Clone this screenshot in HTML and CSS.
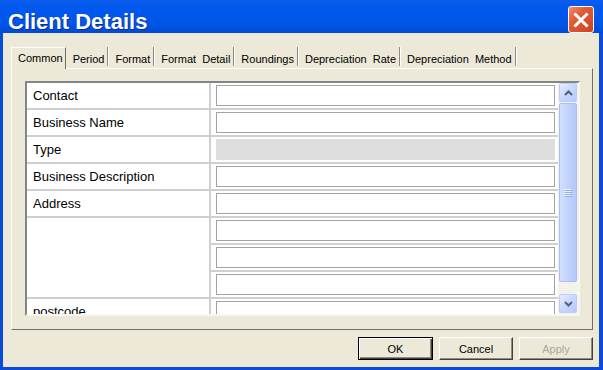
FILE: index.html
```html
<!DOCTYPE html>
<html lang="en">
<head>
    <meta charset="UTF-8">
    <title>Client Details</title>
    <link rel="stylesheet" href="styles.css">
</head>
<body>

    <div class="window">
        <div class="titlebar">
            <span class="title">Client Details</span>
            <div class="close">
                <svg width="16" height="16" viewBox="0 0 16 16">
                    <path d="M2.5 2.5 L13.5 13.5 M13.5 2.5 L2.5 13.5" stroke="#fff" stroke-width="3" stroke-linecap="square" fill="none"/>
                </svg>
            </div>
        </div>

        <div class="client">
            <div class="tabs">
                <div class="tab active">Common</div>
                <div class="tab">Period</div>
                <div class="tab">Format</div>
                <div class="tab">Format  Detail</div>
                <div class="tab">Roundings</div>
                <div class="tab">Depreciation  Rate</div>
                <div class="tab">Depreciation  Method</div>
            </div>

            <div class="panel">
                <div class="grid">
                    <div class="rows">
                        <div class="row">
                            <div class="label">Contact</div>
                            <div class="value"><div class="cell"><div class="box"></div></div></div>
                        </div>
                        <div class="row">
                            <div class="label">Business Name</div>
                            <div class="value"><div class="cell"><div class="box"></div></div></div>
                        </div>
                        <div class="row">
                            <div class="label">Type</div>
                            <div class="value"><div class="cell"><div class="box disabled"></div></div></div>
                        </div>
                        <div class="row">
                            <div class="label">Business Description</div>
                            <div class="value"><div class="cell"><div class="box"></div></div></div>
                        </div>
                        <div class="row">
                            <div class="label">Address</div>
                            <div class="value"><div class="cell"><div class="box"></div></div></div>
                        </div>
                        <div class="row">
                            <div class="label"></div>
                            <div class="value stack">
                                <div class="cell"><div class="box"></div></div>
                                <div class="cell"><div class="box"></div></div>
                                <div class="cell"><div class="box"></div></div>
                            </div>
                        </div>
                        <div class="row">
                            <div class="label">postcode</div>
                            <div class="value"><div class="cell"><div class="box"></div></div></div>
                        </div>
                    </div>

                    <div class="scrollbar">
                        <div class="sb-btn">
                            <svg width="9" height="6" viewBox="0 0 9 6">
                                <polyline points="1,5 4.5,1.5 8,5" stroke="#4d6185" stroke-width="2" fill="none"/>
                            </svg>
                        </div>
                        <div class="thumb">
                            <svg width="8" height="8" viewBox="0 0 8 8">
                                <path d="M0 0.5 H7 M0 2.5 H7 M0 4.5 H7 M0 6.5 H7" stroke="#eef3fe" stroke-width="1"/>
                                <path d="M1 1.5 H8 M1 3.5 H8 M1 5.5 H8 M1 7.5 H8" stroke="#8cacef" stroke-width="1"/>
                            </svg>
                        </div>
                        <div class="track"></div>
                        <div class="sb-btn down">
                            <svg width="9" height="6" viewBox="0 0 9 6">
                                <polyline points="1,1 4.5,4.5 8,1" stroke="#4d6185" stroke-width="2" fill="none"/>
                            </svg>
                        </div>
                    </div>
                </div>
            </div>

            <div class="footer">
                <button class="btn default">OK</button>
                <button class="btn">Cancel</button>
                <button class="btn" disabled>Apply</button>
            </div>
        </div>
    </div>

</body>
</html>
```

FILE: styles.css
```css
* {
    box-sizing: border-box;
}

body {
    margin: 0;
    font-family: "Liberation Sans", Arial, sans-serif;
}

.window {
    width: 603px;
    height: 370px;
    display: flex;
    flex-direction: column;
    background-color: #0b4bd8;
}

.titlebar {
    height: 33px;
    display: flex;
    align-items: flex-start;
    padding-left: 8px;
    background: linear-gradient(to bottom, #0a5ded 0%, #0058ee 30%, #0055e5 75%, #004ad4 100%);
}

.title {
    padding-top: 11px;
    line-height: 22px;
    font-size: 22px;
    font-weight: bold;
    color: white;
    text-shadow: 1px 1px 0 #0b2d8f;
}

.close {
    width: 26px;
    height: 27px;
    margin: 6px 9px 0 auto;
    display: flex;
    justify-content: center;
    align-items: center;
    border: 1px solid white;
    border-radius: 3px;
    background: linear-gradient(135deg, #f08e6e 0%, #e15c37 35%, #cf4220 100%);
}

.client {
    flex: 1;
    margin: 0 4px 3px 3px;
    padding: 13px 6px 0 8px;
    display: flex;
    flex-direction: column;
    background-color: #ece9d8;
}

/* tab strip */
.tabs {
    height: 22px;
    display: flex;
    font-size: 11px;
}

.tab {
    height: 19px;
    margin-top: 1px;
    margin-right: 1px;
    padding: 7px 3px 0 6px;
    line-height: 11px;
    white-space: pre;
    border-right: 1px solid #8d8b80;
    box-shadow: 1px 0 0 white;
}

.tab.active {
    position: relative;
    z-index: 1;
    height: 22px;
    padding: 5px 2px 0 6px;
    border-top: 1px solid white;
    border-left: 1px solid white;
    border-right: 1px solid #716f64;
    box-shadow: none;
    background-color: #ece9d8;
}

.panel {
    height: 262px;
    padding: 12px 12px 13px 13px;
    border: 1px solid;
    border-color: white #716f64 #716f64 white;
}

/* property grid */
.grid {
    height: 235px;
    display: flex;
    border: 2px solid;
    border-color: #858585 #f7f6f0 #f7f6f0 #858585;
    background-color: white;
}

.rows {
    flex: 1;
    overflow: hidden;
}

.row {
    display: flex;
    border-bottom: 2px solid #cfcfcf;
}

.label {
    width: 184px;
    flex-shrink: 0;
    padding-left: 6px;
    line-height: 25px;
    font-size: 13px;
    border-right: 2px solid #cfcfcf;
}

.value {
    flex: 1;
}

.cell {
    padding: 2px 3px 2px 5px;
}

.stack .cell + .cell {
    border-top: 2px solid #cfcfcf;
}

.box {
    height: 21px;
    border: 1px solid #a3a3a3;
    background-color: white;
}

.box.disabled {
    border-color: #dedede;
    background-color: #dedede;
}

/* scrollbar */
.scrollbar {
    width: 20px;
    padding: 0 1px 1px 1px;
    display: flex;
    flex-direction: column;
    background-color: #f3f2ec;
}

.sb-btn {
    height: 19px;
    display: flex;
    justify-content: center;
    align-items: center;
    border: 1px solid #bccdf7;
    border-radius: 2px;
    background: linear-gradient(135deg, #e6eefe 0%, #c8d8fc 50%, #b5c9f9 100%);
}

.thumb {
    height: 179px;
    margin-top: 1px;
    display: flex;
    justify-content: center;
    align-items: center;
    border: 1px solid #a9bff3;
    border-radius: 2px;
    background: linear-gradient(to right, #d3e0fd 0%, #c1d3fc 50%, #b4c8fa 100%);
}

.track {
    flex: 1;
}

/* buttons */
.footer {
    display: flex;
    justify-content: flex-end;
    gap: 6px;
    padding-top: 7px;
}

.btn {
    width: 74px;
    height: 23px;
    padding: 0;
    font-family: "Liberation Sans", Arial, sans-serif;
    font-size: 11px;
    color: black;
    background-color: #ece9d8;
    border: 1px solid;
    border-color: white #404040 #404040 white;
    box-shadow: inset -1px -1px 0 #8d8b80;
}

.btn.default {
    width: 75px;
    border-color: black;
    box-shadow: inset 1px 1px 0 white, inset -1px -1px 0 #404040, inset -2px -2px 0 #8d8b80;
}

.btn:disabled {
    color: #aca899;
}
```
